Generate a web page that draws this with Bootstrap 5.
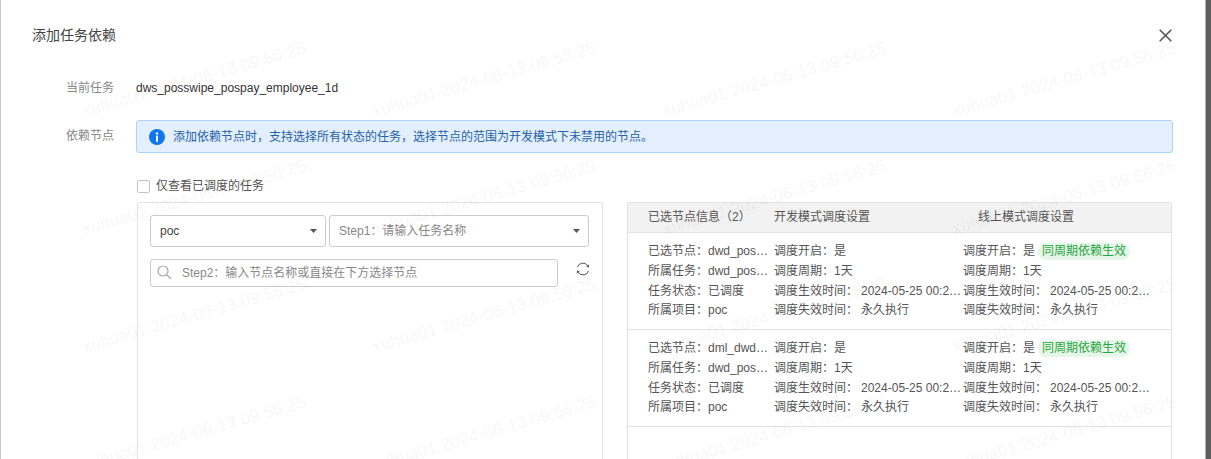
<!DOCTYPE html>
<html lang="zh-CN">
<head>
<meta charset="utf-8">
<title>添加任务依赖</title>
<link rel="stylesheet" href="https://cdn.jsdelivr.net/npm/bootstrap@5.3.0/dist/css/bootstrap.min.css">
<style>
html,body{height:100%;overflow:hidden}
body{background:#5e5e5e;font:12px/20px "Liberation Sans","Noto Sans CJK SC",sans-serif;color:#555}
.sheet{width:1206px;height:459px;background:#fff;border-left:1px solid #c8c8c8;border-right:1px solid #b0b0b0;overflow:hidden;position:relative;padding:25px 32px 0 31px}
.sheet-title{font-size:14px;color:#444;font-weight:400;margin:0;line-height:20px}
.close-x{background:none;border:0;padding:0;line-height:0;margin-right:1px;margin-top:4px}
.field-label{width:104px;padding-left:34px;color:#888;flex:none}
.field-value{color:#333}
.row-task{margin-top:33px}
.row-dep{margin-top:22px}
.dep-label{padding-top:6px}
.dep-body{width:1037px;flex:none}
.notice{background:#e3effd;border:1px solid #aad2fa;border-radius:3px;color:#2361a8;height:33px;padding:0 12px;gap:8px;margin:0}
.notice span{padding-top:1px}
.only-check{margin-top:24px;margin-left:1px;color:#555;line-height:18px;gap:6px}
.only-check .form-check-input{width:13px;height:13px;margin:0;border-color:#c4c4c4;border-radius:2px}
.panes{margin-top:7px;margin-left:1px;gap:24px}
.pick-pane{width:466px;height:320px;border:1px solid #e2e2e2;border-radius:2px;padding:12px;flex:none}
.info-pane{width:545px;height:320px;border:1px solid #e2e2e2;border-radius:2px;flex:none}
.pick-select,.pick-search{font-size:12px;color:#444;border-color:#ccc;border-radius:3px;box-shadow:none}
.pick-select{height:32px;padding:1px 24px 0 9px;line-height:29px;background-position:right 8px center;background-size:7px 4px;background-image:url("data:image/svg+xml,%3Csvg xmlns='http://www.w3.org/2000/svg' viewBox='0 0 7 4'%3E%3Cpath d='M0 0h7L3.5 4z' fill='%23555'/%3E%3C/svg%3E")}
.select-a{width:176px}
.select-b{width:260px;margin-left:3px;color:#888}
.search-box{width:408px;height:28px;margin-top:12px}
.pick-search{height:28px;padding:0 8px 0 31px;min-height:0}
.pick-search::placeholder{color:#888}
.search-ico{position:absolute;left:7px;top:6px}
.refresh-ico{margin-left:18px;margin-top:15px}
.info-head{height:30px;background:#f2f2f2;border-bottom:1px solid #e2e2e2;line-height:29px;color:#555}
.cell-a{width:146px;padding-left:20px;flex:none}
.cell-b{width:189px;flex:none}
.cell-c{width:209px;padding-left:15px;flex:none}
.info-row{height:97px;padding-top:9px;border-bottom:1px solid #e2e2e2;line-height:19.8px}
.info-row .cell-a{padding-right:2px}
.info-row .cell-c{padding-left:0;padding-right:20px}
.tidy{display:block;overflow:hidden;white-space:nowrap;text-overflow:ellipsis}
.sync-tag{display:inline-block;background:#e6f6e9;color:#27a640;border-radius:8px;padding:0 4px;line-height:17px;margin-left:3px}
.gap-val{margin-left:3px}
.wm-layer{position:absolute;left:48px;top:20px;display:grid;grid-template-columns:repeat(4,290px);grid-auto-rows:118px;pointer-events:none}
.wm-mark{display:flex;align-items:center;justify-content:center;white-space:nowrap;font-size:17.3px;color:rgba(0,0,0,.055);transform:rotate(-16deg)}
</style>
</head>
<body>
<div class="sheet">
  <div class="d-flex justify-content-between align-items-start">
    <h5 class="sheet-title">添加任务依赖</h5>
    <button class="close-x" type="button" aria-label="关闭">
      <svg width="13" height="13" viewBox="0 0 13 13"><path d="M.7.7l11.6 11.6M12.3.7L.7 12.3" stroke="#555" stroke-width="1.6" fill="none"/></svg>
    </button>
  </div>

  <div class="d-flex row-task">
    <div class="field-label">当前任务</div>
    <div class="field-value">dws_posswipe_pospay_employee_1d</div>
  </div>

  <div class="d-flex row-dep">
    <div class="field-label dep-label">依赖节点</div>
    <div class="dep-body">
      <div class="notice d-flex align-items-center">
        <svg width="16" height="16" viewBox="0 0 16 16" class="flex-none"><circle cx="8" cy="8" r="8" fill="#0f76ee"/><circle cx="8" cy="4.4" r="1.2" fill="#fff"/><rect x="7" y="6.6" width="2" height="6.2" fill="#fff"/></svg>
        <span>添加依赖节点时，支持选择所有状态的任务，选择节点的范围为开发模式下未禁用的节点。</span>
      </div>

      <label class="only-check d-flex align-items-center">
        <input class="form-check-input" type="checkbox">
        <span>仅查看已调度的任务</span>
      </label>

      <div class="panes d-flex">
        <div class="pick-pane">
          <div class="d-flex">
            <select class="form-select pick-select select-a"><option>poc</option></select>
            <select class="form-select pick-select select-b"><option>Step1：请输入任务名称</option></select>
          </div>
          <div class="d-flex align-items-start">
            <div class="search-box position-relative">
              <svg class="search-ico" width="15" height="15" viewBox="0 0 15 15"><circle cx="6" cy="6" r="5" fill="none" stroke="#aaa" stroke-width="1.2"/><path d="M9.7 9.7l4.3 4.3" stroke="#aaa" stroke-width="1.3"/></svg>
              <input class="form-control pick-search" type="text" placeholder="Step2：输入节点名称或直接在下方选择节点">
            </div>
            <svg class="refresh-ico" width="14" height="14" viewBox="0 0 14 14"><path d="M1.4 5.2A5.8 5.8 0 0 1 11.6 3.4M12.6 8.8A5.8 5.8 0 0 1 2.4 10.6" fill="none" stroke="#555" stroke-width="1"/><path d="M13.3 2.6l-.5 3.2-2.7-1.6zM.7 11.4l.5-3.2 2.7 1.6z" fill="#555"/></svg>
          </div>
        </div>

        <div class="info-pane">
          <div class="info-head d-flex">
            <div class="cell-a">已选节点信息（2）</div>
            <div class="cell-b">开发模式调度设置</div>
            <div class="cell-c">线上模式调度设置</div>
          </div>

          <div class="info-row d-flex">
            <div class="cell-a">
              <span class="tidy">已选节点：dwd_posswipe_pospay_employee_1d</span>
              <span class="tidy">所属任务：dwd_posswipe_pospay_employee_1d</span>
              <span class="tidy">任务状态：已调度</span>
              <span class="tidy">所属项目：poc</span>
            </div>
            <div class="cell-b">
              <span class="tidy">调度开启：是</span>
              <span class="tidy">调度周期：1天</span>
              <span class="tidy">调度生效时间：<span class="gap-val">2024-05-25 00:21:35</span></span>
              <span class="tidy">调度失效时间：<span class="gap-val">永久执行</span></span>
            </div>
            <div class="cell-c">
              <span class="tidy">调度开启：是<span class="sync-tag">同周期依赖生效</span></span>
              <span class="tidy">调度周期：1天</span>
              <span class="tidy">调度生效时间：<span class="gap-val">2024-05-25 00:21:35</span></span>
              <span class="tidy">调度失效时间：<span class="gap-val">永久执行</span></span>
            </div>
          </div>

          <div class="info-row d-flex">
            <div class="cell-a">
              <span class="tidy">已选节点：dml_dwd_posswipe_pospay_1d</span>
              <span class="tidy">所属任务：dwd_posswipe_pospay_employee_1d</span>
              <span class="tidy">任务状态：已调度</span>
              <span class="tidy">所属项目：poc</span>
            </div>
            <div class="cell-b">
              <span class="tidy">调度开启：是</span>
              <span class="tidy">调度周期：1天</span>
              <span class="tidy">调度生效时间：<span class="gap-val">2024-05-25 00:21:35</span></span>
              <span class="tidy">调度失效时间：<span class="gap-val">永久执行</span></span>
            </div>
            <div class="cell-c">
              <span class="tidy">调度开启：是<span class="sync-tag">同周期依赖生效</span></span>
              <span class="tidy">调度周期：1天</span>
              <span class="tidy">调度生效时间：<span class="gap-val">2024-05-25 00:21:35</span></span>
              <span class="tidy">调度失效时间：<span class="gap-val">永久执行</span></span>
            </div>
          </div>
        </div>
      </div>
    </div>
  </div>

  <div class="wm-layer" aria-hidden="true">
    <span class="wm-mark">xuhua01 2024-06-13 09:56:25</span><span class="wm-mark">xuhua01 2024-06-13 09:56:25</span><span class="wm-mark">xuhua01 2024-06-13 09:56:25</span><span class="wm-mark">xuhua01 2024-06-13 09:56:25</span>
    <span class="wm-mark">xuhua01 2024-06-13 09:56:25</span><span class="wm-mark">xuhua01 2024-06-13 09:56:25</span><span class="wm-mark">xuhua01 2024-06-13 09:56:25</span><span class="wm-mark">xuhua01 2024-06-13 09:56:25</span>
    <span class="wm-mark">xuhua01 2024-06-13 09:56:25</span><span class="wm-mark">xuhua01 2024-06-13 09:56:25</span><span class="wm-mark">xuhua01 2024-06-13 09:56:25</span><span class="wm-mark">xuhua01 2024-06-13 09:56:25</span>
    <span class="wm-mark">xuhua01 2024-06-13 09:56:25</span><span class="wm-mark">xuhua01 2024-06-13 09:56:25</span><span class="wm-mark">xuhua01 2024-06-13 09:56:25</span><span class="wm-mark">xuhua01 2024-06-13 09:56:25</span>
  </div>
</div>
<script src="https://cdn.jsdelivr.net/npm/bootstrap@5.3.0/dist/js/bootstrap.bundle.min.js"></script>
</body>
</html>
